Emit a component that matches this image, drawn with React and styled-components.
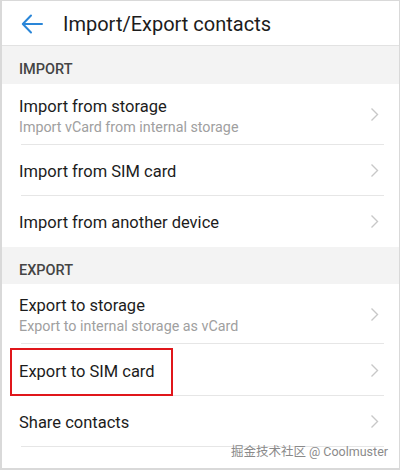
import React from 'react'
import styled, { createGlobalStyle } from 'styled-components'

const GlobalStyle = createGlobalStyle`
  html, body {
    margin: 0;
    padding: 0;
    background: #ffffff;
  }
  * {
    box-sizing: border-box;
  }
`

const Frame = styled.div`
  position: relative;
  width: 400px;
  height: 470px;
  border: 1px solid #d9d9d9;
  border-left-width: 2px;
  border-bottom-width: 2px;
  background: #ffffff;
  font-family: Roboto, "Noto Sans", "Noto Sans CJK SC", sans-serif;
  overflow: hidden;
`

const TopBar = styled.div`
  display: flex;
  align-items: center;
  height: 45px;
  padding-left: 18px;
  padding-top: 2px;
  background: #ffffff;
  border-bottom: 1px solid #e2e2e2;
  box-shadow: 0 1px 2px rgba(0, 0, 0, 0.06);
`

const BackArrow = styled.svg`
  width: 24px;
  height: 24px;
  margin-right: 19px;
`

const Title = styled.h1`
  margin: 0;
  font-size: 20px;
  font-weight: 400;
  color: #1c1c1c;
`

const SectionHeader = styled.div`
  display: flex;
  align-items: center;
  height: ${p => p.$h}px;
  padding-left: 17px;
  padding-top: ${p => p.$pt}px;
  background: #f3f3f3;
  font-size: 14.5px;
  font-weight: 500;
  color: #444444;
`

const Row = styled.div`
  position: relative;
  display: flex;
  align-items: center;
  height: ${p => p.$h}px;
  padding: 0 20px 0 17px;
  &::after {
    content: '';
    display: ${p => (p.$last ? 'none' : 'block')};
    position: absolute;
    left: 19px;
    right: 15px;
    bottom: 0;
    height: 1px;
    background: #e6e6e6;
  }
`

const RowText = styled.div`
  flex: 1;
  display: flex;
  flex-direction: column;
  gap: 3px;
  padding-top: 2px;
`

const RowTitle = styled.span`
  font-size: 16.5px;
  color: #1c1c1c;
`

const RowSub = styled.span`
  font-size: 14.3px;
  color: #a0a0a0;
`

const Chevron = styled.svg`
  width: 9px;
  height: 15px;
`

const Highlight = styled.div`
  position: absolute;
  left: 8px;
  top: 347px;
  width: 163px;
  height: 48px;
  border: 2px solid #e0161b;
`

const Watermark = styled.div`
  position: absolute;
  right: 11px;
  bottom: 8px;
  font-size: 12.5px;
  color: #8a8a8a;
  text-shadow: 0 0 2px #ffffff;
`

const importRows = [
  { title: 'Import from storage', sub: 'Import vCard from internal storage', h: 61 },
  { title: 'Import from SIM card', h: 51 },
  { title: 'Import from another device', h: 51, last: true },
]

const exportRows = [
  { title: 'Export to storage', sub: 'Export to internal storage as vCard', h: 60 },
  { title: 'Export to SIM card', h: 52 },
  { title: 'Share contacts', h: 51 },
]

function Item({ title, sub, h, last }) {
  return (
    <Row $h={h} $last={last}>
      <RowText>
        <RowTitle>{title}</RowTitle>
        {sub && <RowSub>{sub}</RowSub>}
      </RowText>
      <Chevron viewBox="0 0 9 15">
        <path d="M1.5 1.5 L7.5 7.5 L1.5 13.5" fill="none" stroke="#c8c8c8" strokeWidth="1.4" />
      </Chevron>
    </Row>
  )
}

export default function App() {
  return (
    <Frame>
      <GlobalStyle />
      <TopBar>
        <BackArrow viewBox="0 0 24 24">
          <path
            d="M22 12 H3 M11 3.5 L2.8 12 L11 20.5"
            fill="none"
            stroke="#2a86d8"
            strokeWidth="2"
            strokeLinecap="round"
            strokeLinejoin="round"
          />
        </BackArrow>
        <Title>Import/Export contacts</Title>
      </TopBar>
      <SectionHeader $h={38} $pt={9}>IMPORT</SectionHeader>
      {importRows.map(r => (
        <Item key={r.title} {...r} />
      ))}
      <SectionHeader $h={37} $pt={10}>EXPORT</SectionHeader>
      {exportRows.map(r => (
        <Item key={r.title} {...r} />
      ))}
      <Highlight />
      <Watermark>掘金技术社区 @ Coolmuster</Watermark>
    </Frame>
  )
}
